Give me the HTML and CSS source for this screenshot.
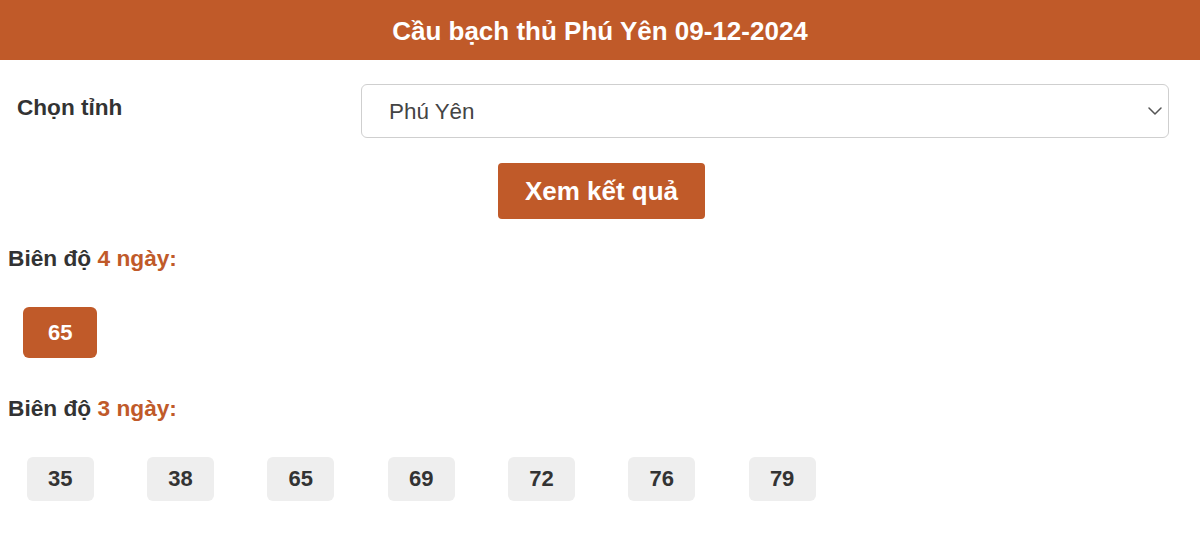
FILE: index.html
```html
<!DOCTYPE html>
<html lang="vi">
<head>
<meta charset="utf-8">
<title>Cầu bạch thủ Phú Yên 09-12-2024</title>
<link rel="stylesheet" href="styles.css">
</head>
<body>
<header class="page-head">
  <h1 class="page-title">Cầu bạch thủ Phú Yên 09-12-2024</h1>
</header>

<form class="picker">
  <div class="picker-row">
    <label class="picker-label" for="province">Chọn tỉnh</label>
    <div class="select-wrap">
      <select id="province" class="select">
        <option>Phú Yên</option>
      </select>
      <svg class="select-caret" width="14" height="8" viewBox="0 0 14 8" aria-hidden="true">
        <path d="M1 1l6 6 6-6" fill="none" stroke="#555" stroke-width="1.5" stroke-linecap="round" stroke-linejoin="round"/>
      </svg>
    </div>
  </div>
  <div class="picker-actions">
    <button type="button" class="btn-primary">Xem kết quả</button>
  </div>
</form>

<section class="range">
  <h2 class="range-title">Biên độ <span class="accent">4 ngày:</span></h2>
  <div class="num-grid">
    <span class="num num-hot">65</span>
  </div>
</section>

<section class="range">
  <h2 class="range-title">Biên độ <span class="accent">3 ngày:</span></h2>
  <div class="num-grid">
    <span class="num">35</span>
    <span class="num">38</span>
    <span class="num">65</span>
    <span class="num">69</span>
    <span class="num">72</span>
    <span class="num">76</span>
    <span class="num">79</span>
  </div>
</section>
</body>
</html>
```

FILE: styles.css
```css
* {
  box-sizing: border-box;
}

html, body {
  margin: 0;
  padding: 0;
  background: #fff;
}

body {
  font-family: "Liberation Sans", Arial, Helvetica, sans-serif;
  color: #333;
}

/* top banner */
.page-head {
  height: 60px;
  background: #c05a29;
  display: flex;
  align-items: center;
  justify-content: center;
}

.page-title {
  margin: 0;
  color: #fff;
  font-size: 26px;
  font-weight: bold;
  line-height: 1;
  padding-top: 2px;
}

/* province picker */
.picker {
  padding-top: 24px;
}

.picker-row {
  display: grid;
  grid-template-columns: 361px 808px;
  align-items: start;
}

.picker-label {
  padding: 11px 0 0 17px;
  font-size: 22.6px;
  font-weight: bold;
  line-height: 26px;
  color: #333;
}

.select-wrap {
  position: relative;
}

.select {
  display: block;
  width: 100%;
  height: 54px;
  margin: 0;
  padding: 0 40px 0 27px;
  border: 1px solid #cfcfcf;
  border-radius: 6px;
  background: #fff;
  font-family: inherit;
  font-size: 22.4px;
  color: #444;
  appearance: none;
  -webkit-appearance: none;
  outline: none;
}

.select-caret {
  position: absolute;
  right: 7px;
  top: 23px;
  pointer-events: none;
}

.picker-actions {
  display: flex;
  justify-content: center;
  padding: 25px 0 0 3px;
}

.btn-primary {
  height: 56px;
  padding: 0 27px;
  border: 0;
  border-radius: 4px;
  background: #c05a29;
  color: #fff;
  font-family: inherit;
  font-size: 26px;
  font-weight: bold;
  cursor: pointer;
}

/* number ranges */
.range {
  padding-left: 8px;
}

.range-title {
  margin: 26px 0 0;
  font-size: 22.7px;
  font-weight: bold;
  line-height: 26px;
  color: #333;
}

.range + .range .range-title {
  margin-top: 37px;
}

.accent {
  color: #c05a29;
}

.num-grid {
  margin: 36px 0 0 -8px;
  display: grid;
  grid-template-columns: repeat(10, 120.33px);
  justify-items: center;
}

.num {
  width: 67px;
  height: 44px;
  display: flex;
  align-items: center;
  justify-content: center;
  border-radius: 6px;
  background: #eee;
  font-size: 22px;
  font-weight: bold;
  color: #333;
}

.num-hot {
  width: 74px;
  height: 51px;
  background: #c05a29;
  color: #fff;
}
```
